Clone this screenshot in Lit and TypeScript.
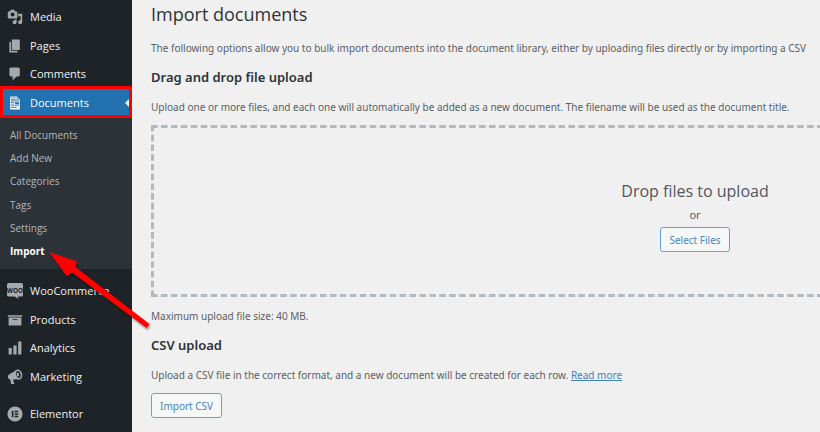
import { LitElement, html, svg, css, type TemplateResult } from "lit";
import { customElement, property } from "lit/decorators.js";
import { classMap } from "lit/directives/class-map.js";

type Glyph = TemplateResult;

const icons: Record<string, Glyph> = {
  media: svg`<path d="M13 11V4c0-.55-.45-1-1-1h-1.67L9 1H5L3.67 3H2c-.55 0-1 .45-1 1v7c0 .55.45 1 1 1h10c.55 0 1-.45 1-1zM7 4.5c1.38 0 2.5 1.12 2.5 2.5S8.38 9.5 7 9.5 4.5 8.38 4.5 7 5.62 4.5 7 4.5zM14 6h5v10.5c0 1.38-1.12 2.5-2.5 2.5S14 17.88 14 16.5s1.12-2.5 2.5-2.5c.17 0 .34.02.5.05V9h-3V6zm-4 8.05V13h2v3.5c0 1.38-1.12 2.5-2.5 2.5S7 17.88 7 16.5 8.12 14 9.5 14c.17 0 .34.02.5.05z"/>`,
  pages: svg`<path d="M6 15V2h10v13H6zm-1 1h8v2H3V5h2v11z"/>`,
  comments: svg`<path d="M5 2h9c1.1 0 2 .9 2 2v7c0 1.1-.9 2-2 2h-2l-5 5v-5H5c-1.1 0-2-.9-2-2V4c0-1.1.9-2 2-2z"/>`,
  documents: svg`<path d="M12 2l4 4v12H4V2h8zM5 3v1h6V3H5zm7 3h3l-3-3v3zM5 5v1h6V5H5zm10 3V7H5v1h10zM5 9v1h4V9H5zm10 3V9h-5v3h5zM5 11v1h4v-1H5zm10 3v-1H5v1h10zm-3 2v-1H5v1h7z"/>`,
  woo: svg`<path d="M2 0h16a2 2 0 0 1 2 2v13a2 2 0 0 1-2 2h-4.500l.8 3-4.800-3H2a2 2 0 0 1-2-2V2a2 2 0 0 1 2-2z"/><text class="woo" x="10" y="12" text-anchor="middle">WOO</text>`,
  products: svg`<path d="M19 4v2H1V4h18zM2 7h16v10H2V7zm11 3V9H7v1h6z"/>`,
  analytics: svg`<path d="M18 18V2h-4v16h4zm-6 0V7H8v11h4zm-6 0v-8H2v8h4z"/>`,
  marketing: svg`<path d="M11.500 1.500 2.500 7C.6 8 .6 13 4 13l1.200 5.600h4L7.500 13l6.200-.2C10.500 11 9.300 5.500 11.500 1.500z"/><ellipse class="bell" cx="14.200" cy="6.900" rx="3.800" ry="5.500" transform="rotate(-14 14.200 6.900)"/><ellipse cx="13.600" cy="7" rx="1.500" ry="2.600" transform="rotate(-14 13.600 7)"/>`,
  elementor: svg`<path fill-rule="evenodd" d="M10 .5a9.500 9.500 0 1 0 0 19 9.500 9.500 0 0 0 0-19zM6 6h2v8H6V6zm3.500 0H14v1.700H9.500V6zm0 3.150H14v1.700H9.500v-1.700zm0 3.150H14V14H9.500v-1.700z"/>`,
};

interface Entry {
  label: string;
  icon: string;
  current?: boolean;
}

const contentMenu: Entry[] = [
  { label: "Media", icon: "media" },
  { label: "Pages", icon: "pages" },
  { label: "Comments", icon: "comments" },
  { label: "Documents", icon: "documents", current: true },
];
const submenu = ["All Documents", "Add New", "Categories", "Tags", "Settings", "Import"];
const shopMenu: Entry[] = [
  { label: "WooCommerce", icon: "woo" },
  { label: "Products", icon: "products" },
  { label: "Analytics", icon: "analytics" },
  { label: "Marketing", icon: "marketing" },
];
const pluginMenu: Entry[] = [{ label: "Elementor", icon: "elementor" }];

@customElement("menu-entry")
class MenuEntry extends LitElement {
  @property({ attribute: false }) entry!: Entry;

  static styles = css`
    :host {
      display: grid;
      position: relative;
    }
    .link {
      display: flex;
      align-items: center;
      gap: 7px;
      padding-left: 7px;
      color: #f0f0f1;
      text-decoration: none;
      white-space: nowrap;
    }
    .icon {
      width: 16px;
      height: 16px;
      flex: none;
      fill: #a7aaad;
    }
    .woo {
      font: bold 8px "Open Sans", sans-serif;
      fill: #1d2327;
    }
    .bell {
      fill: #1d2327;
      stroke: #a7aaad;
      stroke-width: 2;
    }
    .current {
      background: #2271b1;
      color: #fff;
    }
    .current .icon {
      fill: #fff;
    }
    .pointer {
      position: absolute;
      right: 3px;
      top: 50%;
      margin-top: -4px;
      border: 4px solid transparent;
      border-left-width: 0;
      border-right: 4px solid #f0f0f1;
    }
    .highlight {
      position: absolute;
      inset: -3px 0 -1px;
      border: 3px solid #f00;
      pointer-events: none;
    }
  `;

  render() {
    const { label, icon, current } = this.entry;
    return html`
      <a href="#" class=${classMap({ link: true, current: !!current })}>
        <svg class="icon" viewBox="0 0 20 20" aria-hidden="true">${icons[icon]}</svg>
        ${label}
      </a>
      ${current ? html`<span class="pointer"></span><span class="highlight"></span>` : null}
    `;
  }
}

@customElement("admin-sidebar")
class AdminSidebar extends LitElement {
  static styles = css`
    :host {
      display: block;
      position: relative;
      padding-top: 3px;
      background: #1d2327;
      font: 11px/16px "Open Sans", sans-serif;
    }
    .group {
      display: grid;
      grid-auto-rows: 1fr;
      height: 114px;
    }
    .group + .group,
    .submenu + .group {
      margin-top: 8px;
    }
    .single {
      height: 29px;
    }
    .submenu {
      display: grid;
      grid-auto-rows: 1fr;
      height: 140px;
      margin: 0;
      padding: 6px 0;
      list-style: none;
      background: #2c3338;
      font-size: 10px;
    }
    .submenu li {
      display: grid;
      align-items: center;
      padding-left: 10px;
    }
    .submenu a {
      color: #b3b6b9;
      text-decoration: none;
    }
    .submenu .active {
      color: #fff;
      font-weight: 700;
    }
    .arrow {
      position: absolute;
      left: 46px;
      top: 248px;
      width: 108px;
      height: 84px;
      z-index: 1;
      pointer-events: none;
      filter: drop-shadow(1px 2px 1px rgb(0 0 0 / 0.4));
    }
  `;

  private group(entries: Entry[], extra = "") {
    return html`<div class="group ${extra}">
      ${entries.map((e) => html`<menu-entry .entry=${e}></menu-entry>`)}
    </div>`;
  }

  render() {
    return html`
      ${this.group(contentMenu)}
      <ul class="submenu">
        ${submenu.map(
          (s) => html`<li><a href="#" class=${classMap({ active: s === "Import" })}>${s}</a></li>`
        )}
      </ul>
      ${this.group(shopMenu)} ${this.group(pluginMenu, "single")}
      <svg class="arrow" viewBox="0 0 108 84" aria-hidden="true">
        <path fill="#f00" d="M3 4 31 13.500 29.500 19 103.500 76 100.500 80 26 24.500 20.500 28z" />
      </svg>
    `;
  }
}

@customElement("import-page")
class ImportPage extends LitElement {
  static styles = css`
    :host {
      display: block;
      min-width: 1088px;
      padding: 2px 19px 12px;
      box-sizing: content-box;
      color: #5a5f65;
      font: 10px/16px "Noto Sans", sans-serif;
      white-space: nowrap;
    }
    h1,
    h2,
    p {
      margin: 0;
    }
    h1 {
      font: 400 18px/24px "Open Sans", sans-serif;
      color: #2c3338;
    }
    h2 {
      font-size: 13px;
      line-height: 20px;
      font-weight: 600;
      color: #2c3338;
      margin: 11px 0 12px;
    }
    .intro {
      margin-top: 14px;
    }
    .drop {
      position: relative;
      display: flex;
      flex-direction: column;
      align-items: center;
      justify-content: center;
      min-height: 172px;
      margin: 10px 0 11px;
      box-sizing: border-box;
      padding-top: 9px;
    }
    .frame {
      position: absolute;
      inset: 0;
      width: 100%;
      height: 100%;
      overflow: hidden;
      stroke: #b4b9be;
      stroke-width: 6;
      pointer-events: none;
    }
    .across {
      stroke-dasharray: 6.600 3.340;
    }
    .down {
      stroke-dasharray: 6.600 3.130;
    }
    .lead {
      font: 16px/24px "Open Sans", sans-serif;
      color: #50575e;
    }
    .or {
      margin: 4px 0;
      font-size: 11px;
    }
    button {
      height: 25px;
      padding: 0 8px;
      border: 1px solid #6aa1cf;
      border-radius: 3px;
      background: #f6f7f7;
      color: #4a86bb;
      font: 10px/16px "Noto Sans", sans-serif;
    }
    .import {
      display: block;
      margin-top: 10px;
    }
    a {
      color: #3f83be;
    }
  `;

  render() {
    return html`
      <h1>Import documents</h1>
      <p class="intro">
        The following options allow you to bulk import documents into the document library, either
        by uploading files directly or by importing a CSV
      </p>
      <h2>Drag and drop file upload</h2>
      <p>
        Upload one or more files, and each one will automatically be added as a new document. The
        filename will be used as the document title.
      </p>
      <div class="drop">
        <svg class="frame" aria-hidden="true">
          <line class="across" x1="0" y1="0" x2="100%" y2="0" />
          <line class="across" x1="0" y1="100%" x2="100%" y2="100%" />
          <line class="down" x1="0" y1="0" x2="0" y2="100%" />
          <line class="down" x1="100%" y1="0" x2="100%" y2="100%" />
        </svg>
        <p class="lead">Drop files to upload</p>
        <p class="or">or</p>
        <button type="button">Select Files</button>
      </div>
      <p>Maximum upload file size: 40 MB.</p>
      <h2>CSV upload</h2>
      <p>
        Upload a CSV file in the correct format, and a new document will be created for each row.
        <a href="#">Read more</a>
      </p>
      <button type="button" class="import">Import CSV</button>
    `;
  }
}

@customElement("app-root")
class AppRoot extends LitElement {
  static styles = css`
    :host {
      display: block;
    }
    .shell {
      display: grid;
      grid-template-columns: 132px minmax(0, 1fr);
      min-height: 100vh;
      background: #f0f0f0;
      overflow: hidden;
    }
  `;

  render() {
    return html`
      <div class="shell">
        <admin-sidebar></admin-sidebar>
        <main><import-page></import-page></main>
      </div>
    `;
  }
}
